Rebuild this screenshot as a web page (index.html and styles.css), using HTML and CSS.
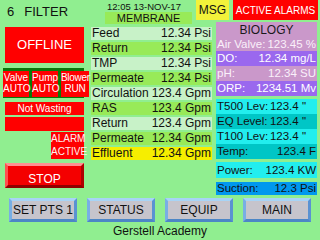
FILE: index.html
```html
<!DOCTYPE html>
<html>
<head>
<meta charset="utf-8">
<link rel="stylesheet" href="styles.css">
</head>
<body>
<div class="screen">
  <header class="top">
    <div class="title"><span>6</span><span>FILTER</span></div>
    <div class="stamp">
      <div class="time">12:05 13-NOV-17</div>
      <div class="membrane">MEMBRANE</div>
    </div>
    <div class="msg">MSG</div>
    <div class="alarms">ACTIVE ALARMS</div>
  </header>
  <main class="main">
    <section class="left">
      <div class="offline">OFFLINE</div>
      <div class="equip-frame">
        <div class="eq eq-narrow">Valve<br>AUTO</div>
        <div class="eq eq-narrow">Pump<br>AUTO</div>
        <div class="eq eq-wide">Blower<br>RUN</div>
      </div>
      <div class="waste">Not Wasting</div>
      <div class="blank-bar"></div>
      <div class="alarm-active">ALARM<br>ACTIVE</div>
      <div class="stop">STOP</div>
    </section>
    <section class="mid">
      <div class="row pale"><span>Feed</span><span>12.34 Psi</span></div>
      <div class="row bright"><span>Return</span><span>12.34 Psi</span></div>
      <div class="row pale"><span>TMP</span><span>12.34 Psi</span></div>
      <div class="row bright"><span>Permeate</span><span>12.34 Psi</span></div>
      <div class="row pale"><span>Circulation</span><span>123.4 Gpm</span></div>
      <div class="row bright"><span>RAS</span><span>123.4 Gpm</span></div>
      <div class="row pale"><span>Return</span><span>123.4 Gpm</span></div>
      <div class="row bright"><span>Permeate</span><span>12.34 Gpm</span></div>
      <div class="row yellow"><span>Effluent</span><span>12.34 Gpm</span></div>
    </section>
    <section class="right">
      <div class="bio">
        <div class="bio-head">BIOLOGY</div>
        <div class="rrow pink short"><span>Air Valve:</span><span>123.45 %</span></div>
        <div class="rrow purple"><span>DO:</span><span>12.34 mg/L</span></div>
        <div class="rrow pink"><span>pH:</span><span>12.34 SU</span></div>
        <div class="rrow purple"><span>ORP:</span><span>1234.51 Mv</span></div>
      </div>
      <div class="tanks">
        <div class="rrow cyan inch"><span>T500 Lev:</span><span>123.4 "</span></div>
        <div class="rrow dcyan inch"><span>EQ Level:</span><span>123.4 "</span></div>
        <div class="rrow cyan inch"><span>T100 Lev:</span><span>123.4 "</span></div>
        <div class="rrow dcyan"><span>Temp:</span><span>123.4 F</span></div>
      </div>
      <div class="rrow cyan power"><span>Power:</span><span>123.4 KW</span></div>
      <div class="rrow blue suction"><span>Suction:</span><span>12.3 Psi</span></div>
    </section>
  </main>
  <nav class="buttons">
    <div class="btn">SET PTS 1</div>
    <div class="btn">STATUS</div>
    <div class="btn">EQUIP</div>
    <div class="btn">MAIN</div>
  </nav>
  <footer class="footer">Gerstell Academy</footer>
</div>
</body>
</html>
```
FILE: styles.css
```css
* { box-sizing: border-box; }
html, body { margin: 0; padding: 0; }
body {
  background: #90EE90;
  font-family: "Liberation Sans", Arial, sans-serif;
  color: #111;
  width: 320px;
  height: 240px;
  overflow: hidden;
}
.screen { width: 320px; height: 240px; display: flex; flex-direction: column; }

.top { display: flex; height: 22px; align-items: flex-start; }
.title {
  width: 105px; padding-left: 7px; padding-top: 4px;
  font-size: 13px; line-height: 15px; display: flex; gap: 10px;
}
.stamp { width: 87px; display: flex; flex-direction: column; }
.time { font-size: 9.5px; line-height: 11px; padding-left: 2px; padding-top: 1px; height: 12px; }
.membrane {
  background: #98EA58; height: 12px; font-size: 11px; line-height: 13px; text-align: center;
}
.msg {
  margin-left: 4px; width: 33px; height: 20px; background: #F2F23A;
  font-size: 12px; line-height: 21px; text-align: center;
}
.alarms {
  margin-left: 4px; width: 85px; height: 20px; background: #FF0000; color: #fff;
  font-size: 10px; line-height: 21px; text-align: center;
}

.main { display: flex; height: 174px; align-items: flex-start; }
.left { margin-left: 5px; width: 79px; padding-top: 5px; display: flex; flex-direction: column; }
.offline {
  height: 36px; background: #FF0000; color: #fff; font-size: 13px; line-height: 36px; text-align: center;
}
.equip-frame {
  margin-left: -2px; width: 81px; height: 30px; margin-top: 5px; padding-top: 3px;
  background: #0A7A0A; display: flex; gap: 3px;
}
.eq {
  height: 26px; background: #FF0000; color: #fff; font-size: 10px; line-height: 11px;
  padding-top: 1px; text-align: center; flex: none; white-space: nowrap;
}
.eq-narrow { width: 26px; }
.eq-wide { width: 28px; letter-spacing: -0.3px; }
.waste {
  margin-top: 4px; height: 13px; background: #FF0000; color: #fff;
  font-size: 10px; line-height: 13px; text-align: center;
}
.blank-bar { margin-top: 2px; height: 14px; background: #FF0000; }
.alarm-active {
  margin-top: 1px; margin-left: 46px; width: 33px; height: 27px; background: #FF0000;
  color: #FFF0F0; font-size: 10px; line-height: 13px; text-align: center;
}
.stop {
  margin-top: 4px; height: 25px; background: #F40000; color: #fff;
  border: 3px solid; border-color: #FF9090 #B00000 #900000 #FF5050;
  font-size: 12px; line-height: 12px; padding-top: 7px; text-align: center;
}

.mid { margin-left: 7px; width: 121px; padding-top: 5px; display: flex; flex-direction: column; gap: 2px; }
.row {
  height: 13px; display: flex; justify-content: space-between;
  font-size: 12px; line-height: 13px; padding: 0 1px; white-space: nowrap;
}
.pale { background: #C8F2C8; }
.bright { background: #98EA58; }
.yellow { background: #F6EE00; }

.right { margin-left: 4px; width: 101px; display: flex; flex-direction: column; }
.bio { display: flex; flex-direction: column; }
.bio-head {
  height: 15px; background: #CA98CA; font-size: 12px; line-height: 16px; text-align: center; color: #1a1a1a;
}
.rrow {
  height: 15px; display: flex; justify-content: space-between; white-space: nowrap;
  font-size: 11.5px; line-height: 15px; padding: 0 1px;
}
.short { height: 14px; line-height: 14px; }
.pink { background: #CA98CA; color: #FAF0FA; }
.purple { background: #9A68EE; color: #fff; }
.tanks { margin-top: 3px; display: flex; flex-direction: column; }
.cyan { background: #22EEEE; color: #111; }
.dcyan { background: #00C6C6; color: #111; }
.inch { padding-right: 11px; }
.power { margin-top: 3px; height: 16px; line-height: 16px; }
.suction { margin-top: 4px; height: 13px; line-height: 13px; }
.blue { background: #0098EE; color: #111; }

.buttons { display: flex; gap: 10px; padding: 0 9px; margin-top: 2px; height: 24px; }
.btn {
  width: 68px; height: 24px; background: #C6C4CC;
  border: 3px solid; border-color: #A8D4F6 #5A92D2 #4C86C6 #78AEE4;
  font-size: 12px; line-height: 18px; text-align: center; color: #111;
}
.footer { margin-top: 2px; text-align: center; font-size: 12px; line-height: 14px; color: #111; }
```
